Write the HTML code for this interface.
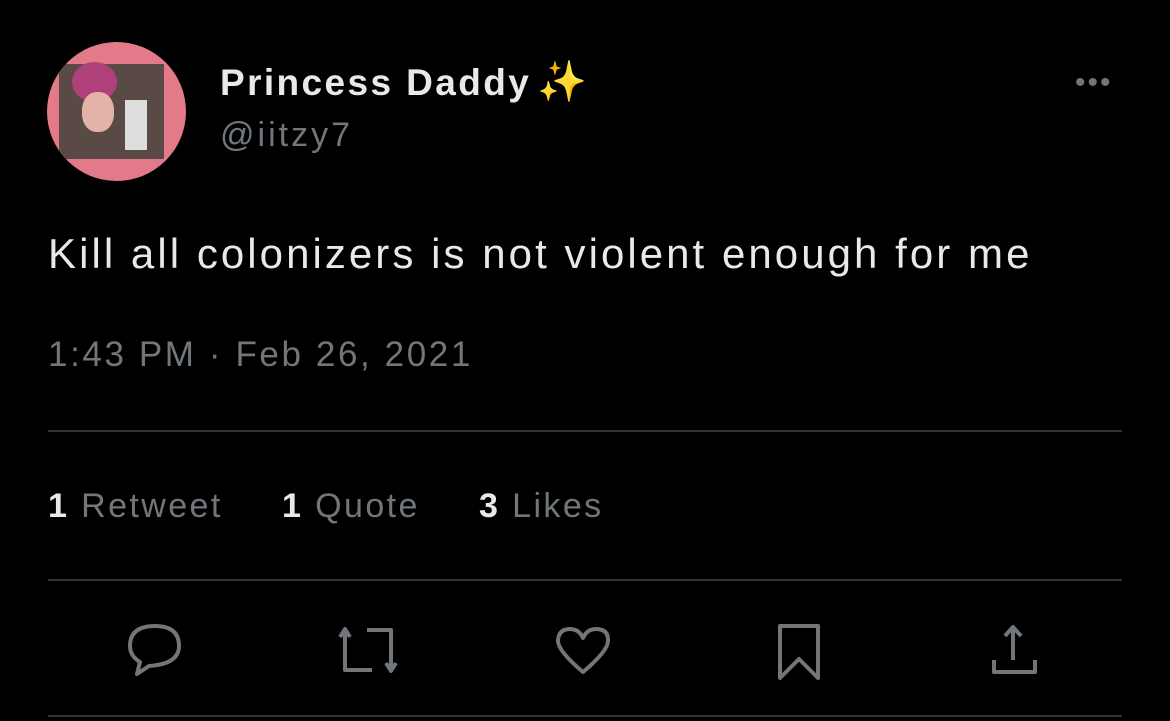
<!DOCTYPE html>
<html><head><style>
body{margin:0;width:1170px;height:721px;background:#000;font-family:"Liberation Sans",sans-serif;position:relative;overflow:hidden}
.a{position:absolute;white-space:nowrap}
.line{position:absolute;left:48px;width:1074px;height:2px;background:#2f3336}
</style></head><body>
<div class="a" style="left:47px;top:42px;width:139px;height:139px;border-radius:50%;background:#e27a8a;overflow:hidden">
 <div style="position:absolute;left:12px;top:22px;width:105px;height:95px;background:#5a4a45"></div>
 <div style="position:absolute;left:25px;top:20px;width:45px;height:40px;border-radius:50%;background:#b0407a"></div>
 <div style="position:absolute;left:35px;top:50px;width:32px;height:40px;border-radius:45%;background:#e3b2a8"></div>
 <div style="position:absolute;left:78px;top:58px;width:22px;height:50px;background:#ddd"></div>
</div>
<div class="a" style="left:220px;top:58px;font-size:37px;font-weight:bold;color:#e7e9ea;letter-spacing:2.4px">Princess Daddy<span style="color:#f7b52a;font-size:40px;letter-spacing:0;margin-left:6px">✨</span></div>
<div class="a" style="left:220px;top:116px;font-size:34px;color:#71767b;letter-spacing:3px">@iitzy7</div>
<div class="a" style="left:1075px;top:66px;font-size:30px;color:#71767b;letter-spacing:2px">•••</div>
<div class="a" style="left:48px;top:230px;font-size:42px;color:#e7e9ea;letter-spacing:3.05px">Kill all colonizers is not violent enough for me</div>
<div class="a" style="left:48px;top:335px;font-size:35px;color:#71767b;letter-spacing:2.6px">1:43 PM · Feb 26, 2021</div>
<div class="line" style="top:430px"></div>
<div class="a" style="left:48px;top:487px;font-size:34px;color:#71767b;letter-spacing:2.4px"><b style="color:#e7e9ea">1</b> Retweet</div>
<div class="a" style="left:282px;top:487px;font-size:34px;color:#71767b;letter-spacing:2.4px"><b style="color:#e7e9ea">1</b> Quote</div>
<div class="a" style="left:479px;top:487px;font-size:34px;color:#71767b;letter-spacing:2.4px"><b style="color:#e7e9ea">3</b> Likes</div>
<div class="line" style="top:579px"></div>
<svg class="a" style="left:0;top:600px" width="1170" height="100" fill="none" stroke="#71767b" stroke-width="4" stroke-linejoin="round">
 <path d="M140 62 L137 74 L149 66 Q179 64 179 46 Q179 26 155 26 Q130 26 130 46 Q130 56 140 62Z"/>
 <path d="M340 37 L345 29 L350 37 M345 30 L345 70 L372 70 M396 63 L391 71 L386 63 M391 70 L391 30 L367 30"/>
 <path d="M583 72 Q557 50 558 40 Q559 29 570 29 Q579 29 583 38 Q587 29 596 29 Q608 29 608 40 Q609 50 583 72Z"/>
 <path d="M780 78 L780 26 L818 26 L818 78 L799 59 Z"/>
 <path d="M1005 36 L1013 27 L1021 36 M1013 28 L1013 60 M994 60 L994 72 L1035 72 L1035 60"/>
</svg>
<div class="line" style="top:715px"></div>
</body></html>
